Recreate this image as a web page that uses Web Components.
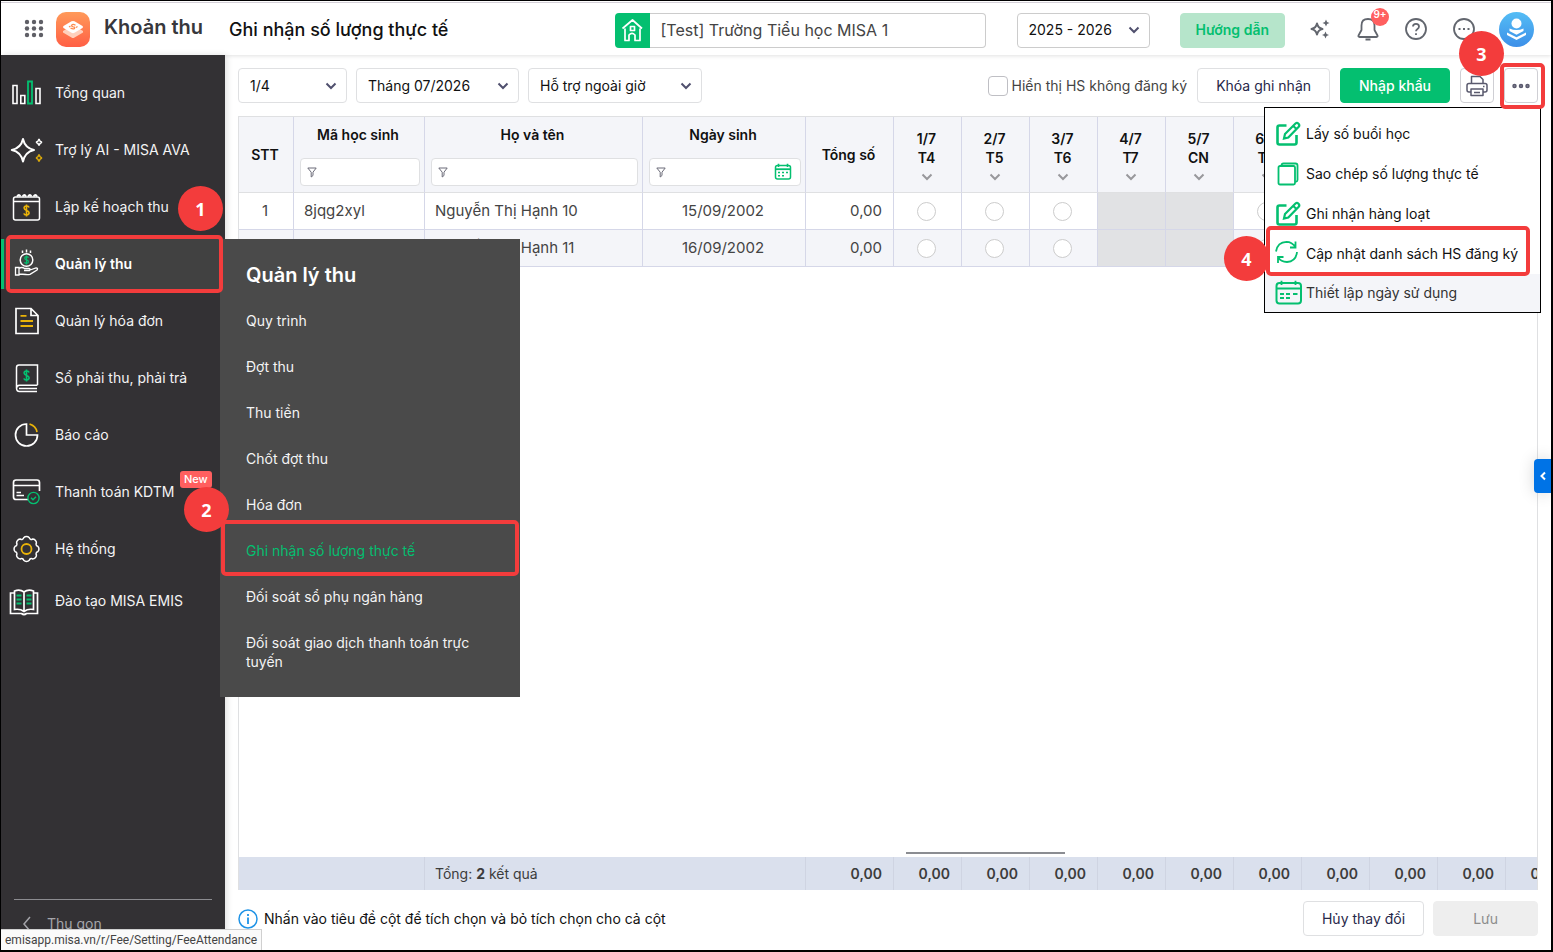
<!DOCTYPE html>
<html lang="vi">
<head>
<meta charset="utf-8">
<meta name="viewport" content="width=device-width, initial-scale=1">
<title>Ghi nhận số lượng thực tế</title>
<style>
  html, body { height: 100%; }
  body {
    margin: 0;
    font: 14px/20px Inter, "Noto Sans", sans-serif;
    color: #111;
    --green: #04bf70;
    --red: #f33c3c;
    --line: #d5d7e8;
    --border: #dfe0e2;
  }
</style>
</head>
<body>
<app-shell></app-shell>

<script>
  // outline of the settings cog, eight rounded teeth
  function cogPath(cx, cy, r) {
    const point = (deg, rad) => {
      const a = deg * Math.PI / 180;
      return (cx + rad * Math.cos(a)).toFixed(2) + ' ' + (cy + rad * Math.sin(a)).toFixed(2);
    };
    let d = 'M' + point(-14, r);
    for (let i = 0; i < 8; i++) {
      d += ` A3.9 3.9 0 0 1 ${point(i * 45 + 14, r)} A2 2 0 0 0 ${point(i * 45 + 31, r)}`;
    }
    return d + 'Z';
  }

  const dollar = (x, y, color) => `<path transform="translate(${x} ${y})" stroke="${color}" stroke-width="1.6" d="M2.6-3C2-5-2.4-5-2.4-2.4C-2.4.4 2.6-.6 2.6 2.3C2.6 5-2.2 5-2.6 2.8M0-6V6"/>`;
  const pencil = '<path stroke-width="2.6" d="M11.5 4.5H4.5Q2.5 4.500 2.500 6.500V21.500Q2.500 23.500 4.500 23.500H19.500Q21.500 23.500 21.500 21.500V14"/><path stroke-width="2.200" d="M9 17.500L10 13L20.500 2.500Q22 1.200 23.500 2.700T23.700 5.800L13.300 16.500ZM18.300 5L21.500 8"/>';

  // name: [width, height, stroke, markup]
  const ICONS = {
    overview: [30, 30, '#fff', '<path stroke-width="1.600" d="M2 7.500h4v18h-4zM9.800 17.500h4v8h-4zM25 10.500h4v15h-4z"/><path stroke="#04bf70" stroke-width="1.800" d="M17 3.500h4v22h-4z"/>'],
    ai: [30, 30, '#fff', '<path stroke-width="2" stroke-linejoin="round" d="M12 4Q14 13 23 15Q14 17 12 26.500Q10 17 .800 15Q10 13 12 4Z"/><path d="M28 3.800Q28.600 6.600 31 7.200Q28.600 7.800 28 10.600Q27.400 7.800 25 7.200Q27.400 6.600 28 3.800Z"/><path stroke="#d9a80b" d="M28 19.500Q28.600 22.400 31 23Q28.600 23.600 28 26.500Q27.400 23.600 25 23Q27.400 22.400 28 19.500Z"/>'],
    plan: [30, 30, '#fff', '<rect x="2.500" y="5" width="26" height="23" rx="2"/><path d="M2.500 9.500H28.500"/><path stroke-width="1.800" d="M6 4.500q2-3 3.500 0M11.500 4.500q2-3 3.500 0M17 4.500q2-3 3.500 0M22.500 4.500q2-3 3.500 0"/>' + dollar(15.5, 18.5, '#eab308')],
    income: [30, 30, '#fff', '<circle cx="15.500" cy="11" r="6.300"/><path d="M15.500 .500V3.500M11.500 1.500V4M19.500 1.500V4"/><g transform="translate(3.900 2.750) scale(.75)">' + dollar(15.5, 11, '#04bf70') + '</g><path stroke-width="1.300" d="M4.500 18.500H8V26H4.500ZM8 19.500Q11 17.500 13.500 19.500H18Q20 20 18.500 21.500H13M19 21L25 19Q27.500 19 26 21L19 25.300Q17 26 15 25.500L8 25"/>'],
    invoice: [30, 30, '#fff', '<path stroke-width="1.700" d="M5 2.500H20L27 9.500V27.500H5ZM20 2.500V9.500H27"/><path stroke="#eab308" stroke-width="1.800" d="M9.500 9.800H15.500M9.500 15H22M9.500 20H22"/>'],
    ledger: [30, 30, '#fff', '<path stroke-width="1.500" d="M26.500 22V2H8Q5.500 2 5.500 4.500V25Q5.500 28.500 8.500 28.500H26M26.500 22.300H8.500Q5.500 22.500 5.500 25.500M8 25.500H26"/>' + dollar(15.5, 12.5, '#04bf70')],
    report: [30, 30, '#fff', '<path stroke-width="1.700" d="M15.500 4A11 11 0 1 0 26.500 15H15.500Z"/><path stroke="#eab308" stroke-width="1.800" d="M18.500 4Q25 6 26 12"/>'],
    payment: [30, 30, '#fff', '<path stroke-width="1.700" d="M17 22.500H5Q2.500 22.500 2.500 20V5.500Q2.500 3 5 3H26Q28.500 3 28.500 5.500V14M2.500 8.500H28.500M5.500 15.500H10M5.500 18.500H13"/><circle cx="22.500" cy="21" r="5.600" stroke="#04bf70" stroke-width="1.400"/><path stroke="#04bf70" stroke-width="1.400" d="M20 20.800L22 22.800L25 19.800"/>'],
    system: [30, 30, '#fff', `<path d="${cogPath(15.5, 15, 11.6)}"/><circle cx="15.500" cy="15" r="5" stroke="#eab308" stroke-width="1.800"/>`],
    training: [30, 30, '#fff', '<path stroke-width="1.700" d="M13 6Q9 3 3.500 5V23.500Q9 22.500 13 25.500Q17 22.500 22.500 23.500V5Q17 3 13 6V25M3.500 7H-.500V27.500H10.500Q13 29.500 15.500 27.500H26.500V7H22.500"/><path stroke="#04bf70" stroke-width="2" d="M5.500 9.500H10.500M5.500 13.500H10.500M5.500 17.500H10.500M15.500 9.500H20.500M15.500 13.500H20.500M15.500 17.500H20.500"/>'],
    back: [10, 18, '#a5a5aa', '<path d="M8 2L2 9L8 16"/>'],
    grid: [20, 20, 'none', '<g fill="#5f5f66"><circle cx="3" cy="3" r="2.200"/><circle cx="10" cy="3" r="2.200"/><circle cx="17" cy="3" r="2.200"/><circle cx="3" cy="9.500" r="2.200"/><circle cx="10" cy="9.500" r="2.200"/><circle cx="17" cy="9.500" r="2.200"/><circle cx="3" cy="16" r="2.200"/><circle cx="10" cy="16" r="2.200"/><circle cx="17" cy="16" r="2.200"/></g>'],
    logo: [34, 35, 'none', '<defs><linearGradient id="g" x2="0" y2="1"><stop stop-color="#ff9a5a"/><stop offset="1" stop-color="#ff5f45"/></linearGradient></defs><rect width="34" height="35" rx="10" fill="url(#g)"/><path fill="#ffd0bd" d="M7 19L17 13L27 19V20.500L18.500 25.500Q17 26.500 15.500 25.500L7 20.500Z"/><path fill="#fff" d="M15.500 9.300Q17 8.500 18.500 9.300L26.500 14Q27.500 15 26.500 16L18.500 20.800Q17 21.500 15.500 20.800L7.500 16Q6.500 15 7.500 14Z"/><path stroke="#ff8a4c" stroke-width="1.200" d="M19.500 13.300Q17 11.800 15.800 13Q15 14.500 17.200 14.800Q19.500 15 18.500 16.500Q17 17.500 14.500 16M13 15l1.500-1M20 15.500l1.500-1"/>'],
    home: [34, 35, '#fff', '<path stroke-width="1.700" stroke-linejoin="round" d="M10 15.500V27.500H14V22Q17 19 20 22V27.500H25V15.500M7.500 15.500L17.500 7L27 15.500M15.500 13.500h4v4h-4z"/>'],
    sparkle: [22, 20, '#62666e', '<path stroke-width="2" stroke-linejoin="round" d="M7 4.500Q8 9 12.500 10Q8 11 7 15.500Q6 11 1.500 10Q6 9 7 4.500Z"/><path fill="#62666e" stroke="none" d="M16 .500L17.100 2.900L19.500 4L17.100 5.100L16 7.500L14.900 5.100L12.500 4L14.900 2.900ZM15.500 12.500L16.600 14.900L19 16L16.600 17.100L15.500 19.500L14.400 17.100L12 16L14.400 14.900Z"/>'],
    bell: [24, 26, '#62666e', '<path stroke-width="1.800" stroke-linejoin="round" d="M12 3Q5.500 3 5.500 9.500V14L2.500 19.500Q2 21 3.500 21H20.500Q22 21 21.500 19.500L18.500 14V9.500Q18.500 3 12 3Z"/><path stroke-width="2" d="M9.500 23.500H14.500"/>'],
    help: [24, 24, '#62666e', '<circle cx="12" cy="12" r="10" stroke-width="1.800"/><path stroke-width="1.800" d="M9 9.500Q9 6.800 12 6.800T15 9.500Q15 11 13.500 12Q12 13 12 14.300M12 16.300V18"/>'],
    chat: [24, 24, '#62666e', '<circle cx="12" cy="12" r="10" stroke-width="1.800"/><path stroke-width="2" d="M6.500 12H8.500M11 12H13M15.500 12H17.500"/>'],
    avatar: [35, 35, 'none', '<defs><linearGradient id="a" x2="0" y2="1"><stop stop-color="#54bdf5"/><stop offset="1" stop-color="#3d8fe8"/></linearGradient></defs><circle cx="17.500" cy="17.500" r="17.500" fill="url(#a)"/><circle cx="17.500" cy="11.500" r="5" fill="#fff"/><path fill="#fff" d="M10.500 16.500Q14 18 17.500 18T24.500 16.500V19L17.500 22.800L10.500 19ZM8 20.500L17.500 25.300L27 20.500V23L17.500 28L8 23Z"/>'],
    chevron: [12, 8, '#50506e', '<path stroke-width="2" d="M1.500 1.500L6 6L10.500 1.500"/>'],
    chevronGrey: [12, 8, '#98989c', '<path stroke-width="2" d="M1.500 1.500L6 6L10.500 1.500"/>'],
    filter: [10, 11, '#6b6b78', '<path stroke-width="1" stroke-linejoin="round" d="M.800 1H9.200L6 5.200V8.500L4.200 10V5.200Z"/>'],
    calendar: [18, 18, '#04bf70', '<rect x="1.500" y="2.500" width="15" height="13.500" rx="2"/><path d="M1.500 6.200H16.500" stroke-width="1.800"/><path stroke-width="1.600" d="M4.500 .800V4M13.500 .800V4M4 9.500H6M8 9.500H10M12 9.500H14M4 12.800H6M8 12.800H10"/>'],
    print: [22, 22, '#5a5a6e', '<path stroke-width="1.500" stroke-linejoin="round" d="M5.500 8V1.500H14L17 4.500V8M5 17H3Q1 17 1 15V10.500Q1 8.500 3 8.500H19Q21 8.500 21 10.500V15Q21 17 19 17H17M5 14H17V20.500H5Z"/><path d="M17 11.500h1.500M8 17.500H14"/>'],
    more: [20, 8, '#5a5a6e', '<g fill="#8a8a9a"><circle cx="3.500" cy="4" r="1.500"/><circle cx="10" cy="4" r="1.500"/><circle cx="16.500" cy="4" r="1.500"/></g>'],
    edit: [26, 26, '#04bf70', pencil],
    copy: [26, 26, '#04bf70', '<rect x="3.500" y="5" width="16.500" height="18.500" rx="1.500" stroke-width="1.800"/><path stroke-width="1.800" d="M6.500 4.500Q6.500 2.500 8.500 2.500H20.500Q22.500 2.500 22.500 4.500V19Q22.500 20.500 20.500 21"/>'],
    refresh: [26, 26, '#04bf70', '<path stroke-width="1.800" d="M1 10.500Q2.500 1 11.500 .800Q17 .800 20.500 6M20.500 .500V6.500H15M22 11Q21 20.500 12 21Q6 21 2.800 16M3 22V16H8.500"/>'],
    schedule: [28, 26, '#04bf70', '<rect x="1.500" y="3" width="24.500" height="20.500" rx="3" stroke-width="2"/><path stroke-width="1.800" d="M1.500 8.500H26M6.500 .800V5M20.500 .800V5M5 14H9M11 14H15M18 14H22.500M5 18H9M11 18H15"/>'],
    info: [20, 20, '#1f93e6', '<circle cx="10" cy="10" r="9"/><path stroke-width="1.800" d="M10 8.500V15M10 5V7"/>'],
    collapse: [8, 10, '#fff', '<path stroke-width="2" d="M6 1.500L2.500 5L6 8.500"/>']
  };

  class AppIcon extends HTMLElement {
    constructor() {
      super();
      this.attachShadow({ mode: 'open' });
    }

    connectedCallback() {
      const [w, h, stroke, markup] = ICONS[this.getAttribute('name')];
      this.shadowRoot.innerHTML = `
        <style>
          :host { display: inline-flex; flex: none; }
          svg { display: block; overflow: visible; }
        </style>
        <svg width="${w}" height="${h}" viewBox="0 0 ${w} ${h}" fill="none" stroke="${stroke}" stroke-width="1.500" aria-hidden="true">${markup}</svg>
      `;
    }
  }

  // round numbered marker; its owner decides where it floats
  class StepBadge extends HTMLElement {
    constructor() {
      super();
      this.attachShadow({ mode: 'open' }).innerHTML = `
        <style>
          :host {
            position: absolute;
            z-index: 3;
            display: flex;
            align-items: center;
            justify-content: center;
            width: 45px;
            height: 45px;
            border-radius: 50%;
            background: var(--red);
            color: #fff;
            font: 700 18px/24px "Open Sans", "Noto Sans", sans-serif;
          }
        </style>
        <slot></slot>
      `;
    }
  }

  class FocusRing extends HTMLElement {
    constructor() {
      super();
      this.attachShadow({ mode: 'open' }).innerHTML = `
        <style>
          :host {
            position: absolute;
            z-index: 2;
            box-sizing: border-box;
            border: 4px solid var(--red);
            border-radius: 5px;
            pointer-events: none;
          }
        </style>
      `;
    }
  }

  class SelectBox extends HTMLElement {
    constructor() {
      super();
      this.attachShadow({ mode: 'open' });
    }

    connectedCallback() {
      this.shadowRoot.innerHTML = `
        <style>
          :host { display: grid; align-items: center; flex: none; }
          select {
            grid-area: 1 / 1;
            appearance: none;
            width: 100%;
            height: 35px;
            padding: 0 30px 0 11px;
            border: 1px solid var(--select-border, var(--border));
            border-radius: 4px;
            background: #fff;
            color: #111;
            font: inherit;
          }
          app-icon { grid-area: 1 / 1; justify-self: end; margin-right: 10px; pointer-events: none; }
        </style>
        <select aria-label="${this.getAttribute('label')}"><option>${this.getAttribute('value')}</option></select>
        <app-icon name="chevron"></app-icon>
      `;
    }
  }

  class ActionButton extends HTMLElement {
    constructor() {
      super();
      this.attachShadow({ mode: 'open' });
    }

    connectedCallback() {
      const label = this.getAttribute('label');
      this.shadowRoot.innerHTML = `
        <style>
          :host { display: flex; flex: none; }
          button {
            display: flex;
            align-items: center;
            justify-content: center;
            height: 35px;
            padding: 0 18px;
            border: 1px solid var(--border);
            border-radius: 4px;
            background: #fff;
            color: #28284a;
            font: inherit;
            white-space: nowrap;
          }
          .primary { border-color: var(--green); background: var(--green); color: #fff; font-weight: 500; }
          .soft { border-color: #b6e5cb; background: #b6e5cb; color: var(--green); font-weight: 600; padding: 0 15px; }
          .icon { width: 34px; padding: 0; border-color: #cfcfd4; }
          .muted { border-color: #eee; background: #eee; color: #8c8c8c; padding: 0 39px; }
        </style>
        <button type="button" class="${this.getAttribute('kind') || ''}" ${label ? `aria-label="${label}"` : ''}
          ${this.hasAttribute('disabled') ? 'disabled' : ''}><slot></slot></button>
      `;
    }
  }

  class AppHeader extends HTMLElement {
    constructor() {
      super();
      this.attachShadow({ mode: 'open' }).innerHTML = `
        <style>
          :host {
            position: relative;
            z-index: 1;
            box-sizing: border-box;
            display: flex;
            align-items: center;
            flex: none;
            height: 54px;
            padding: 3px 17px 0 23px;
            border-top: 1px solid #fff;
            background: #fff;
            box-shadow: 0 1px 4px rgba(0, 0, 0, .12), inset 0 1px #d4d0d8;
          }
          .apps { display: flex; padding: 0 0 2px; border: 0; background: none; }
          .logo { margin-left: 12px; padding-bottom: 2px; }
          .app { margin-left: 14px; padding-bottom: 6px; color: #37373c; font-size: 20px; line-height: 24px; font-weight: 600; white-space: nowrap; }
          h1 { margin: 0 20px 0 26px; font-size: 18px; line-height: 24px; font-weight: 500; white-space: nowrap; }
          .tools { display: flex; align-items: center; margin-left: auto; }
          .school { display: flex; height: 35px; width: 371px; }
          .school app-icon { width: 35px; height: 35px; border-radius: 4px 0 0 4px; background: var(--green); }
          .school input {
            flex: 1;
            min-width: 0;
            padding: 0 11px;
            border: 1px solid #ccc;
            border-left: 0;
            border-radius: 0 4px 4px 0;
            color: #444;
            font: inherit;
            font-size: 16px;
          }
          select-box { width: 133px; margin: 0 30px 0 31px; --select-border: #ccc; }
          .icons { display: flex; align-items: center; gap: 24px; margin: 0 23px 0 25px; padding-bottom: 2px; }
          .user { padding-bottom: 2px; }
          .bell { position: relative; display: flex; }
          .count {
            position: absolute;
            top: -8px;
            right: -9px;
            width: 18px;
            height: 18px;
            border-radius: 50%;
            background: #ff5f5f;
            color: #fff;
            font-size: 10px;
            line-height: 12px;
            font-weight: 600;
            text-align: center;
          }
        </style>
        <button class="apps" type="button" aria-label="Ứng dụng"><app-icon name="grid"></app-icon></button>
        <app-icon class="logo" name="logo"></app-icon>
        <span class="app">Khoản thu</span>
        <h1>Ghi nhận số lượng thực tế</h1>
        <div class="tools">
          <div class="school">
            <app-icon name="home"></app-icon>
            <input type="text" aria-label="Trường" value="[Test] Trường Tiểu học MISA 1">
          </div>
          <select-box label="Năm học" value="2025 - 2026"></select-box>
          <action-button kind="soft">Hướng dẫn</action-button>
          <div class="icons">
            <app-icon name="sparkle"></app-icon>
            <span class="bell"><app-icon name="bell"></app-icon><span class="count">9+</span></span>
            <app-icon name="help"></app-icon>
            <app-icon name="chat"></app-icon>
          </div>
          <app-icon class="user" name="avatar"></app-icon>
        </div>
      `;
    }
  }

  class NavItem extends HTMLElement {
    constructor() {
      super();
      this.attachShadow({ mode: 'open' });
    }

    connectedCallback() {
      this.shadowRoot.innerHTML = `
        <style>
          :host { position: relative; display: block; }
          a {
            display: flex;
            align-items: center;
            gap: 14px;
            height: 50px;
            padding-left: 10px;
            color: #f4f4f4;
            text-decoration: none;
            white-space: nowrap;
          }
          :host([active]) a { padding-left: 7px; border-left: 3px solid var(--green); background: #414141; color: #fff; font-weight: 600; }
        </style>
        <a href="#"><app-icon name="${this.getAttribute('icon')}"></app-icon><span>${this.getAttribute('label')}</span></a>
        <slot></slot>
      `;
    }
  }

  class SubMenu extends HTMLElement {
    constructor() {
      super();
      this.attachShadow({ mode: 'open' }).innerHTML = `
        <style>
          :host {
            position: absolute;
            top: 0;
            left: 219px;
            z-index: 1;
            box-sizing: border-box;
            width: 300px;
            padding: 24px 26px 26px;
            background: #4a4a4a;
            color: #fff;
          }
          h2 { margin: 0 0 24px; font-size: 20px; line-height: 24px; font-weight: 600; }
          ul { display: flex; flex-direction: column; gap: 27px; margin: 0; padding: 0; list-style: none; line-height: 19px; }
          li { position: relative; }
          a { color: #f4f4f4; text-decoration: none; }
          .current { color: var(--green); }
          focus-ring { inset: -21px -25px -16px -25px; }
          step-badge { left: -62px; top: -54px; }
        </style>
        <h2>Quản lý thu</h2>
        <ul>
          <li><a href="#">Quy trình</a></li>
          <li><a href="#">Đợt thu</a></li>
          <li><a href="#">Thu tiền</a></li>
          <li><a href="#">Chốt đợt thu</a></li>
          <li><a href="#">Hóa đơn</a></li>
          <li><a class="current" href="#">Ghi nhận số lượng thực tế</a><focus-ring></focus-ring><step-badge>2</step-badge></li>
          <li><a href="#">Đối soát sổ phụ ngân hàng</a></li>
          <li><a href="#">Đối soát giao dịch thanh toán trực tuyến</a></li>
        </ul>
      `;
    }
  }

  class SideNav extends HTMLElement {
    constructor() {
      super();
      this.attachShadow({ mode: 'open' }).innerHTML = `
        <style>
          :host {
            position: relative;
            z-index: 2;
            display: flex;
            flex-direction: column;
            flex: none;
            width: 224px;
            background: #333134;
            box-shadow: 2px 0 6px rgba(0, 0, 0, .12);
          }
          nav { display: flex; flex-direction: column; gap: 7px; padding-top: 13px; }
          .extra { padding-top: 2px; }
          .plan-step { right: 2px; top: 4px; }
          .ring { inset: -4px 2px -4px 5px; }
          .new {
            position: absolute;
            left: 179px;
            top: 4px;
            padding: 0 4px;
            border-radius: 3px;
            background: #ff5f5f;
            color: #fff;
            font-size: 11px;
            line-height: 17px;
            font-weight: 500;
          }
          .fold { margin: auto 13px 0; padding: 14px 0 16px 8px; border-top: 1px solid #8c8c90; }
          .fold button { display: flex; align-items: center; gap: 15px; padding: 0; border: 0; background: none; color: #a5a5aa; font: inherit; }
        </style>
        <nav>
          <nav-item icon="overview" label="Tổng quan"></nav-item>
          <nav-item icon="ai" label="Trợ lý AI - MISA AVA"></nav-item>
          <nav-item icon="plan" label="Lập kế hoạch thu"><step-badge class="plan-step">1</step-badge></nav-item>
          <nav-item icon="income" label="Quản lý thu" active><focus-ring class="ring"></focus-ring><sub-menu></sub-menu></nav-item>
          <nav-item icon="invoice" label="Quản lý hóa đơn"></nav-item>
          <nav-item icon="ledger" label="Sổ phải thu, phải trả"></nav-item>
          <nav-item icon="report" label="Báo cáo"></nav-item>
          <nav-item icon="payment" label="Thanh toán KDTM"><span class="new">New</span></nav-item>
          <nav-item icon="system" label="Hệ thống"></nav-item>
        </nav>
        <nav class="extra"><nav-item icon="training" label="Đào tạo MISA EMIS"></nav-item></nav>
        <div class="fold"><button type="button"><app-icon name="back"></app-icon>Thu gọn</button></div>
      `;
    }
  }

  class MoreMenu extends HTMLElement {
    constructor() {
      super();
      this.attachShadow({ mode: 'open' }).innerHTML = `
        <style>
          :host { position: relative; z-index: 4; display: block; flex: none; }
          .menu {
            position: absolute;
            top: 39px;
            right: -3px;
            box-sizing: border-box;
            width: 277px;
            padding-top: 6px;
            border: 1px solid #000;
            background: #fff;
          }
          .item { position: relative; }
          .item button {
            display: flex;
            align-items: center;
            width: 100%;
            height: 40px;
            padding: 0 0 0 10px;
            border: 0;
            background: none;
            color: #111;
            font: inherit;
            text-align: left;
            white-space: nowrap;
          }
          .item app-icon { width: 31px; }
          .item .last { height: 38px; background: #f4f5f9; color: #333; }
          .button-ring { inset: -5px -7px -6px -4px; }
          .button-step { left: -45px; top: -37px; }
          .item-ring { inset: -8px 10px -2px 1px; }
          .item-step { left: -41px; top: 2px; z-index: 1; }
        </style>
        <action-button kind="icon" label="Thêm"><app-icon name="more"></app-icon></action-button>
        <div class="menu">
          <div class="item"><button type="button"><app-icon name="edit"></app-icon>Lấy số buổi học</button></div>
          <div class="item"><button type="button"><app-icon name="copy"></app-icon>Sao chép số lượng thực tế</button></div>
          <div class="item"><button type="button"><app-icon name="edit"></app-icon>Ghi nhận hàng loạt</button></div>
          <div class="item">
            <button type="button"><app-icon name="refresh"></app-icon>Cập nhật danh sách HS đăng ký</button>
            <focus-ring class="item-ring"></focus-ring>
            <step-badge class="item-step">4</step-badge>
          </div>
          <div class="item"><button class="last" type="button"><app-icon name="schedule"></app-icon>Thiết lập ngày sử dụng</button></div>
        </div>
        <focus-ring class="button-ring"></focus-ring>
        <step-badge class="button-step">3</step-badge>
      `;
    }
  }

  class FeeToolbar extends HTMLElement {
    constructor() {
      super();
      this.attachShadow({ mode: 'open' }).innerHTML = `
        <style>
          :host { display: flex; align-items: center; flex: none; gap: 10px; margin-bottom: 13px; }
          .filters { display: flex; gap: 9px; }
          .grade { width: 109px; }
          .month { width: 163px; }
          .service { width: 174px; }
          label { display: flex; align-items: center; gap: 4px; margin-left: auto; color: #444; white-space: nowrap; }
          input { appearance: none; width: 20px; height: 20px; margin: 0; border: 1px solid #bfbfc4; border-radius: 4px; background: #fff; }
        </style>
        <div class="filters">
          <select-box class="grade" label="Lớp" value="1/4"></select-box>
          <select-box class="month" label="Tháng" value="Tháng 07/2026"></select-box>
          <select-box class="service" label="Khoản thu" value="Hỗ trợ ngoài giờ"></select-box>
        </div>
        <label><input type="checkbox">Hiển thị HS không đăng ký</label>
        <action-button>Khóa ghi nhận</action-button>
        <action-button kind="primary">Nhập khẩu</action-button>
        <action-button kind="icon" label="In"><app-icon name="print"></app-icon></action-button>
        <more-menu></more-menu>
      `;
    }
  }

  class FilterBox extends HTMLElement {
    constructor() {
      super();
      this.attachShadow({ mode: 'open' });
    }

    connectedCallback() {
      this.shadowRoot.innerHTML = `
        <style>
          :host {
            display: flex;
            align-items: center;
            height: 26px;
            padding: 0 8px 0 6px;
            border: 1px solid var(--border);
            border-radius: 4px;
            background: #fff;
          }
          input { flex: 1; min-width: 0; border: 0; outline: 0; background: none; font: inherit; }
        </style>
        <app-icon name="filter"></app-icon>
        <input type="text" aria-label="${this.getAttribute('label')}">
        ${this.hasAttribute('date') ? '<app-icon name="calendar"></app-icon>' : ''}
      `;
    }
  }

  const DAYS = [
    ['1/7', 'T4'], ['2/7', 'T5'], ['3/7', 'T6'], ['4/7', 'T7'], ['5/7', 'CN'],
    ['6/7', 'T2'], [], [], [], []
  ];
  const STUDENTS = [
    { code: '8jqg2xyl', name: 'Nguyễn Thị Hạnh 10', birthday: '15/09/2002' },
    { code: '', name: 'Nguyễn Thị Hạnh 11', birthday: '16/09/2002' }
  ];

  class AttendanceTable extends HTMLElement {
    constructor() {
      super();
      this.attachShadow({ mode: 'open' });
    }

    dayHead([date, day]) {
      if (!date) return '<th></th>';
      return `<th class="day">${date}<br>${day}<app-icon name="chevronGrey"></app-icon></th>`;
    }

    dayCell([date, day], student) {
      if (!date) return '<td></td>';
      if (day === 'T7' || day === 'CN') return '<td class="off"></td>';
      return `<td class="center"><input type="checkbox" aria-label="${student.name} ${date}"></td>`;
    }

    connectedCallback() {
      const rows = STUDENTS.map((s, i) => `
        <tr class="student">
          <td class="center">${i + 1}</td>
          <td>${s.code}</td>
          <td>${s.name}</td>
          <td class="center">${s.birthday}</td>
          <td class="num">0,00</td>
          ${DAYS.map((d) => this.dayCell(d, s)).join('')}
        </tr>`).join('');

      this.shadowRoot.innerHTML = `
        <style>
          :host { display: block; flex: 1; min-height: 0; overflow: hidden; border: solid var(--border); border-width: 1px 1px 0; }
          table { width: 1335px; min-width: 100%; height: 100%; table-layout: fixed; border-collapse: separate; border-spacing: 0; }
          th, td { box-sizing: border-box; padding: 0 10px; border-right: 1px solid var(--line); text-align: left; white-space: nowrap; }
          th { height: 76px; padding: 0 6px 0 4px; border-bottom: 1px solid var(--border); background: #f4f5f9; font-weight: 600; text-align: center; }
          th .title { display: block; padding: 2px 0 13px; }
          th filter-box { margin: 0 -2px 0 2px; }
          th.day { padding: 0 2px 0 0; line-height: 19px; }
          th.day app-icon { display: flex; justify-content: center; padding-top: 6px; }
          .student td { height: 37px; border-bottom: 1px solid var(--line); color: #444; font-size: 15px; }
          .student:nth-child(2) td { background: #f4f5f9; }
          .student .center { padding: 0 2px 0 0; text-align: center; }
          .num { padding-right: 11px; text-align: right; }
          .student .off { background: #e1e2e4; }
          .student:nth-child(2) .off { background: #e1e2e4; }
          .student input { appearance: none; display: block; width: 19px; height: 19px; margin: 0 auto; border: 1px solid #ccc; border-radius: 50%; background: #fff; }
          .rest td { border: 0; padding: 0; vertical-align: bottom; }
          .thumb { width: 159px; height: 2px; margin: 0 0 3px 12px; background: #8b8d92; }
          tfoot td { height: 33px; border-right-color: #cfd4e2; background: #dae0ed; color: #3c3c3c; }
          tfoot .num { font-weight: 600; }
          b { font-weight: 700; }
        </style>
        <table>
          <colgroup>
            <col style="width: 55px"><col style="width: 131px"><col style="width: 218px"><col style="width: 163px"><col style="width: 88px">
            ${DAYS.map(() => '<col style="width: 68px">').join('')}
          </colgroup>
          <thead>
            <tr>
              <th>STT</th>
              <th><span class="title">Mã học sinh</span><filter-box label="Lọc mã học sinh"></filter-box></th>
              <th><span class="title">Họ và tên</span><filter-box label="Lọc họ và tên"></filter-box></th>
              <th><span class="title">Ngày sinh</span><filter-box label="Lọc ngày sinh" date></filter-box></th>
              <th>Tổng số</th>
              ${DAYS.map((d) => this.dayHead(d)).join('')}
            </tr>
          </thead>
          <tbody>${rows}
            <tr class="rest"><td colspan="5"></td><td colspan="${DAYS.length}"><div class="thumb"></div></td></tr>
          </tbody>
          <tfoot>
            <tr>
              <td colspan="2"></td>
              <td colspan="2">Tổng: <b>2</b> kết quả</td>
              <td class="num">0,00</td>
              ${DAYS.map(() => '<td class="num">0,00</td>').join('')}
            </tr>
          </tfoot>
        </table>
      `;
    }
  }

  class PageFooter extends HTMLElement {
    constructor() {
      super();
      this.attachShadow({ mode: 'open' }).innerHTML = `
        <style>
          :host { display: flex; align-items: center; flex: none; gap: 9px; margin-top: 11px; }
          p { display: flex; align-items: center; gap: 6px; margin: 0 auto 0 0; }
        </style>
        <p><app-icon name="info"></app-icon>Nhấn vào tiêu đề cột để tích chọn và bỏ tích chọn cho cả cột</p>
        <action-button>Hủy thay đổi</action-button>
        <action-button kind="muted" disabled>Lưu</action-button>
      `;
    }
  }

  class AppShell extends HTMLElement {
    constructor() {
      super();
      this.attachShadow({ mode: 'open' }).innerHTML = `
        <style>
          :host {
            position: relative;
            box-sizing: border-box;
            display: flex;
            flex-direction: column;
            height: 100vh;
            overflow: hidden;
            border: solid #000;
            border-width: 1px 2px 2px 1px;
            background: #fff;
          }
          .body { display: flex; flex: 1; min-height: 0; }
          main { display: flex; flex-direction: column; flex: 1; min-width: 0; padding: 13px 13px 14px; }
          .drawer {
            position: absolute;
            right: 0;
            top: 458px;
            display: flex;
            align-items: center;
            justify-content: center;
            width: 17px;
            height: 34px;
            padding: 0;
            border: 0;
            border-radius: 4px 0 0 4px;
            background: #0073e6;
            box-shadow: 0 0 16px rgba(0, 0, 0, .16);
          }
          .status {
            position: absolute;
            left: 0;
            bottom: 0;
            z-index: 3;
            padding: 0 4px;
            border: solid #d0d0d0;
            border-width: 1px 1px 0 0;
            background: #fafafa;
            color: #444;
            font: 12px/20px Roboto, "Noto Sans", sans-serif;
          }
        </style>
        <app-header></app-header>
        <div class="body">
          <side-nav></side-nav>
          <main>
            <fee-toolbar></fee-toolbar>
            <attendance-table></attendance-table>
            <page-footer></page-footer>
          </main>
        </div>
        <button class="drawer" type="button" aria-label="Mở rộng"><app-icon name="collapse"></app-icon></button>
        <div class="status">emisapp.misa.vn/r/Fee/Setting/FeeAttendance</div>
      `;
    }
  }

  customElements.define('app-icon', AppIcon);
  customElements.define('step-badge', StepBadge);
  customElements.define('focus-ring', FocusRing);
  customElements.define('select-box', SelectBox);
  customElements.define('action-button', ActionButton);
  customElements.define('app-header', AppHeader);
  customElements.define('nav-item', NavItem);
  customElements.define('sub-menu', SubMenu);
  customElements.define('side-nav', SideNav);
  customElements.define('more-menu', MoreMenu);
  customElements.define('fee-toolbar', FeeToolbar);
  customElements.define('filter-box', FilterBox);
  customElements.define('attendance-table', AttendanceTable);
  customElements.define('page-footer', PageFooter);
  customElements.define('app-shell', AppShell);
</script>
</body>
</html>
